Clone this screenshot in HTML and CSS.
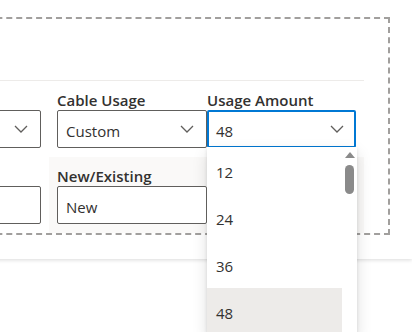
FILE: index.html
```html
<!DOCTYPE html>
<html lang="en">
<head>
  <meta charset="UTF-8" />
  <meta name="viewport" content="width=device-width, initial-scale=1.0" />
  <title>Cable Usage</title>
  <link rel="stylesheet" href="styles.css">
</head>
<body>

  <div class="card">
    <div class="zone">
      <div class="zone-header"></div>

      <div class="form-row">
        <div class="field field-side">
          <label class="field-label">&nbsp;</label>
          <div class="select">
            <span class="select-text"></span>
            <svg class="chevron" viewBox="0 0 14 8"><polyline points="1,1 7,7 13,1" /></svg>
          </div>
        </div>
        <div class="section">
          <div class="field field-wide">
            <label class="field-label">Cable Usage</label>
            <div class="select">
              <span class="select-text">Custom</span>
              <svg class="chevron" viewBox="0 0 14 8"><polyline points="1,1 7,7 13,1" /></svg>
            </div>
          </div>
          <div class="field field-fill">
            <label class="field-label">Usage Amount</label>
            <div class="select is-open">
              <span class="select-text">48</span>
              <svg class="chevron" viewBox="0 0 14 8"><polyline points="1,1 7,7 13,1" /></svg>

              <!-- open dropdown list -->
              <div class="options">
                <ul class="option-list">
                  <li>12</li>
                  <li>24</li>
                  <li>36</li>
                  <li class="selected">48</li>
                </ul>
                <div class="scrollbar">
                  <span class="scroll-up"></span>
                  <span class="scroll-thumb"></span>
                </div>
              </div>
            </div>
          </div>
        </div>
      </div>

      <div class="form-row">
        <div class="field field-side">
          <label class="field-label">&nbsp;</label>
          <div class="textbox"></div>
        </div>
        <div class="section section-shaded">
          <div class="field field-wide">
            <label class="field-label">New/Existing</label>
            <div class="textbox">New</div>
          </div>
        </div>
      </div>
    </div>
  </div>

</body>
</html>
```

FILE: styles.css
```css
body {
  font-family: 'Open Sans', 'Noto Sans', sans-serif;
  margin: 0;
  background: #fff;
  color: #323130;
  overflow: hidden;
  height: 332px;
}
.card {
  background: #fff;
  margin-left: -120px;
  width: calc(100% + 120px);
  padding: 17px 0 24px;
  box-shadow: 0 1.6px 3.6px rgba(0,0,0,0.13), 0 0.3px 0.9px rgba(0,0,0,0.11);
}
.zone {
  margin: 0 22px 0 7px;
  border: 2px dashed #a19f9d;
  padding: 0 24px 0 2px;
}
.zone-header {
  height: 61px;
  border-bottom: 1px solid #edebe9;
  margin-left: -2px;
}
.form-row {
  display: flex;
}
.zone-header + .form-row { padding: 9px 0; }
.field-side {
  width: 150px;
  padding: 9px 0;
}
.zone-header + .form-row .field-side { padding: 0; }
.section {
  flex: 1;
  margin-left: 8px;
  padding: 0 8px;
  display: flex;
}
.section-shaded {
  background: #faf9f8;
  padding: 9px 8px;
}
.field-wide { width: 150px; }
.field-fill { flex: 1; }
.field-label {
  display: block;
  font-size: 15px;
  font-weight: 600;
  line-height: 20px;
  color: #323130;
}
.select, .textbox {
  position: relative;
  box-sizing: border-box;
  height: 38px;
  border: 1px solid #605e5c;
  border-radius: 2px;
  background: #fff;
  padding: 3px 8px 0;
  display: flex;
  align-items: center;
  font-size: 15px;
}
.select-text { flex: 1; }
.chevron {
  width: 14px;
  height: 8px;
  margin: -3px 4px 0 0;
  fill: none;
  stroke: #605e5c;
  stroke-width: 1.3;
}
.select.is-open {
  border: 2px solid #0078d4;
  padding: 3px 7px 0;
}
.select.is-open .chevron { margin-right: 3px; }

/* dropdown callout */
.options {
  position: absolute;
  top: calc(100% + 1px);
  left: -2px;
  right: -3px;
  height: 188px;
  display: flex;
  background: #fff;
  overflow: hidden;
  box-shadow: 0 6.4px 14.4px rgba(0,0,0,0.13), 0 1.2px 3.6px rgba(0,0,0,0.11);
}
.option-list {
  flex: 1;
  list-style: none;
  margin: 0;
  padding: 0;
}
.option-list li {
  height: 47px;
  box-sizing: border-box;
  padding: 4px 0 0 9px;
  line-height: 43px;
  font-size: 15px;
  color: #323130;
}
.option-list li.selected { background: #edebe9; }
.scrollbar {
  width: 15px;
  display: flex;
  flex-direction: column;
  align-items: center;
}
.scroll-up {
  margin-top: 5px;
  border-left: 5px solid transparent;
  border-right: 5px solid transparent;
  border-bottom: 6px solid #8a8a8a;
}
.scroll-thumb {
  margin-top: 7px;
  width: 9px;
  height: 29px;
  border-radius: 5px;
  background: #8a8a8a;
}
```
